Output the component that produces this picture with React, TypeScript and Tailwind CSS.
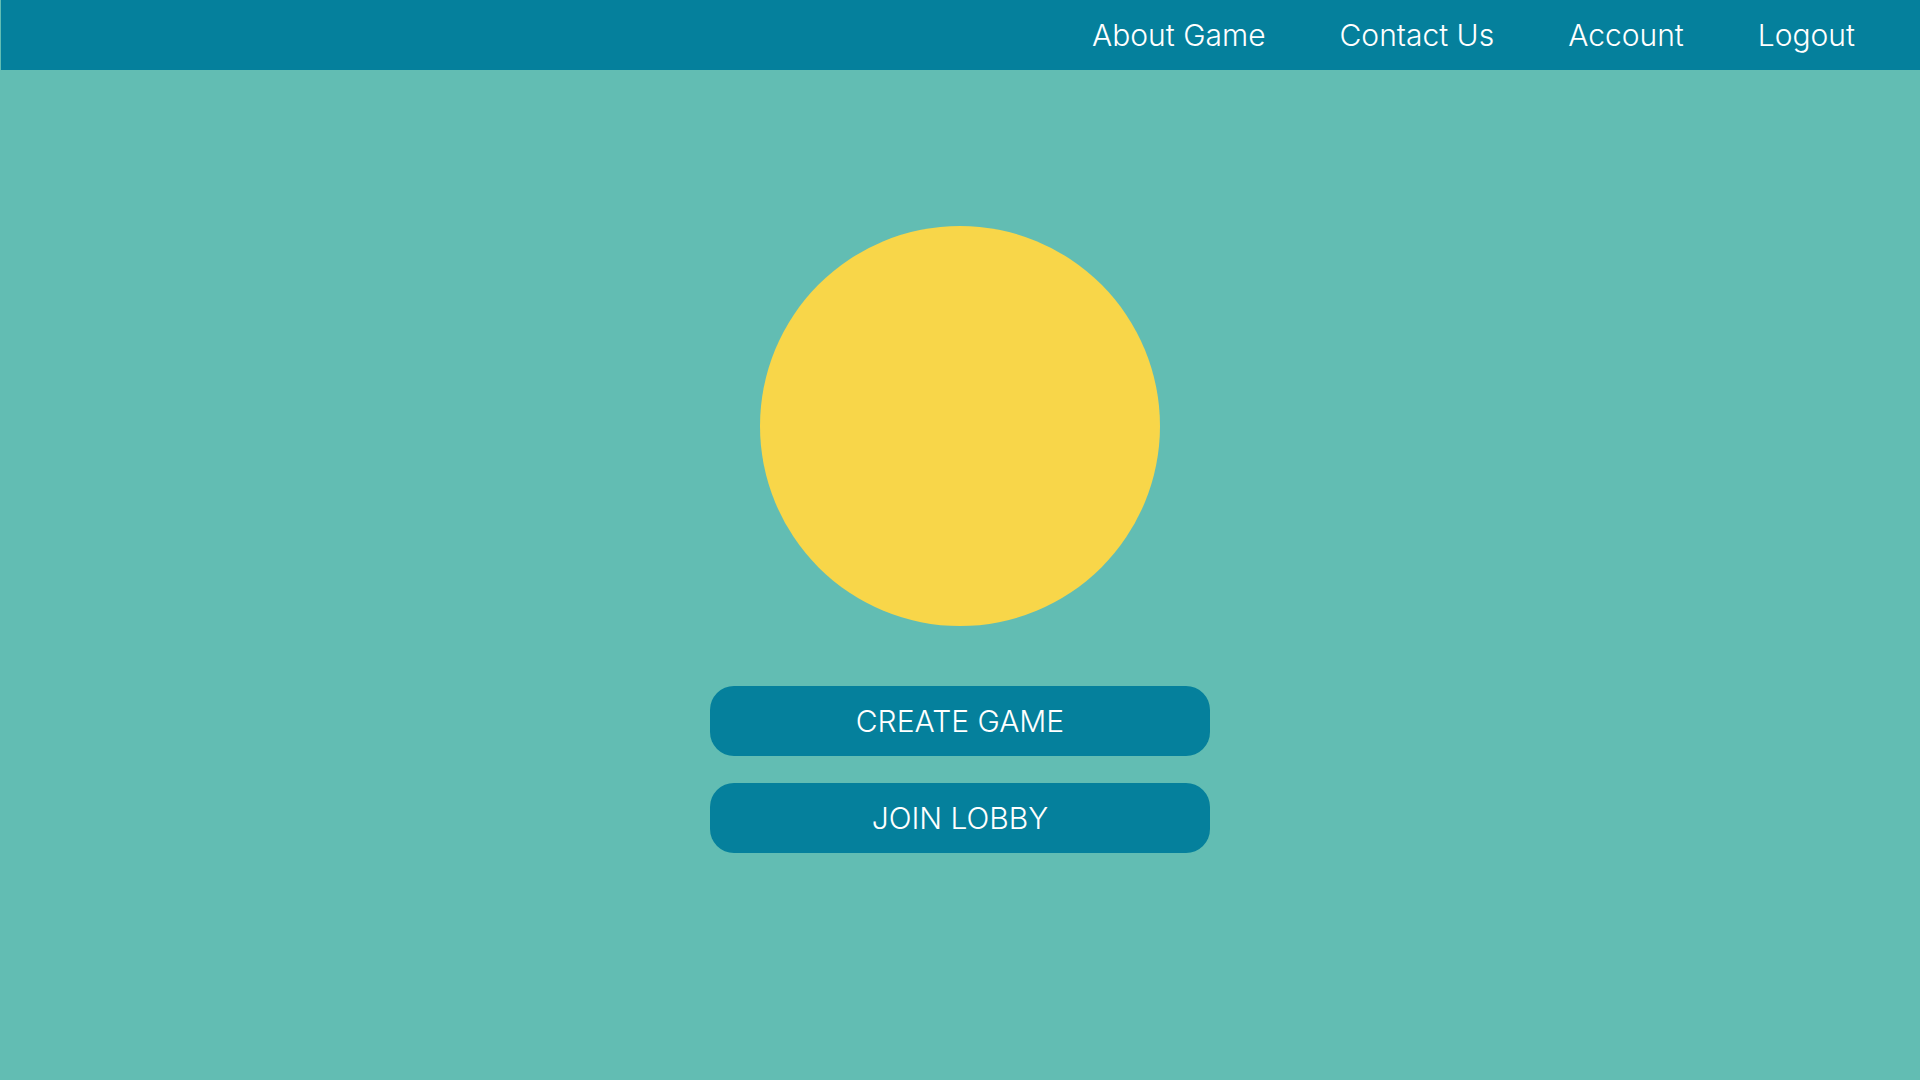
export default function App() {
  return (
    <div className="min-h-screen w-full bg-[#62bdb3] font-['Inter',sans-serif] text-white">
      {/* Top nav */}
      <nav className="ml-[1px] flex h-[70px] items-center justify-end gap-[74px] bg-[#05809c] pr-[65px]">
        <a className="text-[30px] font-light leading-none">About Game</a>
        <a className="text-[30px] font-light leading-none">Contact Us</a>
        <a className="text-[30px] font-light leading-none">Account</a>
        <a className="text-[30px] font-light leading-none">Logout</a>
      </nav>

      <main className="flex flex-col items-center pt-[156px]">
        <div className="h-[400px] w-[400px] rounded-full bg-[#f8d649]" />

        <div className="mt-[60px] flex flex-col gap-[27px]">
          <button className="h-[70px] w-[500px] rounded-[24px] bg-[#05809c] text-[30px] font-light text-white">
            CREATE GAME
          </button>
          <button className="h-[70px] w-[500px] rounded-[24px] bg-[#05809c] text-[30px] font-light text-white">
            JOIN LOBBY
          </button>
        </div>
      </main>
    </div>
  );
}
